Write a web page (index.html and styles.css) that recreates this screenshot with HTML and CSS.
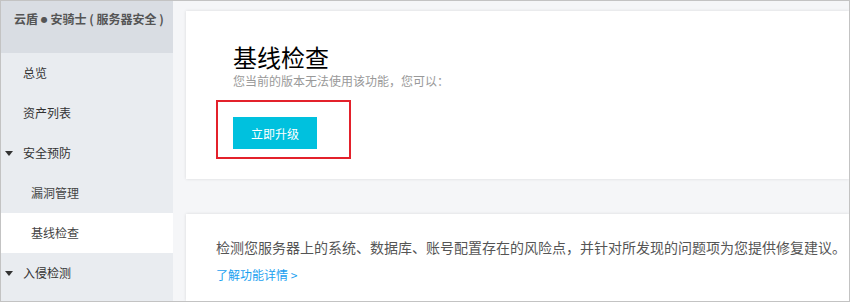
FILE: index.html
```html
<!DOCTYPE html>
<html lang="zh">
<head>
<meta charset="utf-8">
<link rel="stylesheet" href="styles.css">
</head>
<body>
<div class="frame">
  <aside class="sidebar">
    <div class="side-head">云盾 <span class="dot">●</span> 安骑士 ( 服务器安全 )</div>
    <ul class="menu">
      <li class="item">总览</li>
      <li class="item">资产列表</li>
      <li class="item group"><span class="caret"></span>安全预防</li>
      <li class="item sub">漏洞管理</li>
      <li class="item sub active">基线检查</li>
      <li class="item group"><span class="caret"></span>入侵检测</li>
    </ul>
  </aside>
  <main class="main">
    <section class="card card-top">
      <h1 class="title">基线检查</h1>
      <p class="subtitle">您当前的版本无法使用该功能，您可以：</p>
      <div class="highlight">
        <button class="btn">立即升级</button>
      </div>
    </section>
    <section class="card card-desc">
      <p class="desc">检测您服务器上的系统、数据库、账号配置存在的风险点，并针对所发现的问题项为您提供修复建议。</p>
      <a class="more" href="#">了解功能详情 &gt;</a>
    </section>
  </main>
</div>
</body>
</html>
```
FILE: styles.css
```css
* { box-sizing: border-box; }
html, body {
  margin: 0;
  padding: 0;
  width: 850px;
  height: 302px;
  overflow: hidden;
  background: #f5f6f8;
  font-family: "Microsoft YaHei", "Noto Sans CJK SC", "Liberation Sans", sans-serif;
  font-size: 12px;
}
.frame {
  width: 850px;
  height: 302px;
  border: 1px solid #c3c3c3;
  display: flex;
  overflow: hidden;
  background: #f5f6f8;
}
.sidebar {
  width: 172px;
  flex: none;
  background: #e9ecf0;
  display: flex;
  flex-direction: column;
}
.side-head {
  height: 52px;
  background: #d9dde3;
  color: #555;
  font-weight: bold;
  font-size: 12px;
  padding: 10px 0 0 13px;
  line-height: 16px;
  white-space: nowrap;
}
.dot {
  font-size: 8px;
  vertical-align: 2px;
  font-family: "DejaVu Sans", sans-serif;
}
.menu {
  list-style: none;
  margin: 0;
  padding: 0;
}
.item {
  height: 40px;
  line-height: 40px;
  padding-left: 22px;
  color: #333;
  font-size: 12px;
  position: relative;
}
.item.sub { padding-left: 30px; color: #444; }
.item.active { background: #fff; }
.caret {
  position: absolute;
  left: 4px;
  top: 18px;
  width: 0;
  height: 0;
  border-left: 4px solid transparent;
  border-right: 4px solid transparent;
  border-top: 5px solid #333;
}
.main {
  flex: 1;
  padding: 10px 0 0 13px;
  display: flex;
  flex-direction: column;
  gap: 35px;
}
.card {
  background: #fff;
  box-shadow: 0 0 3px rgba(0,0,0,0.12);
}
.card-top {
  height: 168px;
  padding: 32px 0 0 47px;
}
.title {
  margin: 0;
  font-size: 24px;
  font-weight: normal;
  line-height: 28px;
  color: #000;
}
.subtitle {
  margin: 2px 0 0;
  color: #999;
  font-size: 12px;
  line-height: 16px;
}
.highlight {
  margin: 11px 0 0 -17px;
  width: 135px;
  height: 59px;
  border: 2px solid #e3212b;
  padding: 15px 0 0 15px;
}
.btn {
  display: block;
  width: 84px;
  height: 32px;
  border: none;
  background: #00c1de;
  color: #fff;
  font-family: inherit;
  font-size: 12px;
  padding: 0;
}
.card-desc {
  flex: 1;
  padding: 23px 0 0 30px;
}
.desc {
  margin: 0;
  font-size: 14px;
  color: #555;
  line-height: 20px;
  white-space: nowrap;
}
.more {
  display: inline-block;
  margin-top: 10px;
  color: #1a9ff0;
  text-decoration: none;
  font-size: 12px;
  line-height: 16px;
}
```
